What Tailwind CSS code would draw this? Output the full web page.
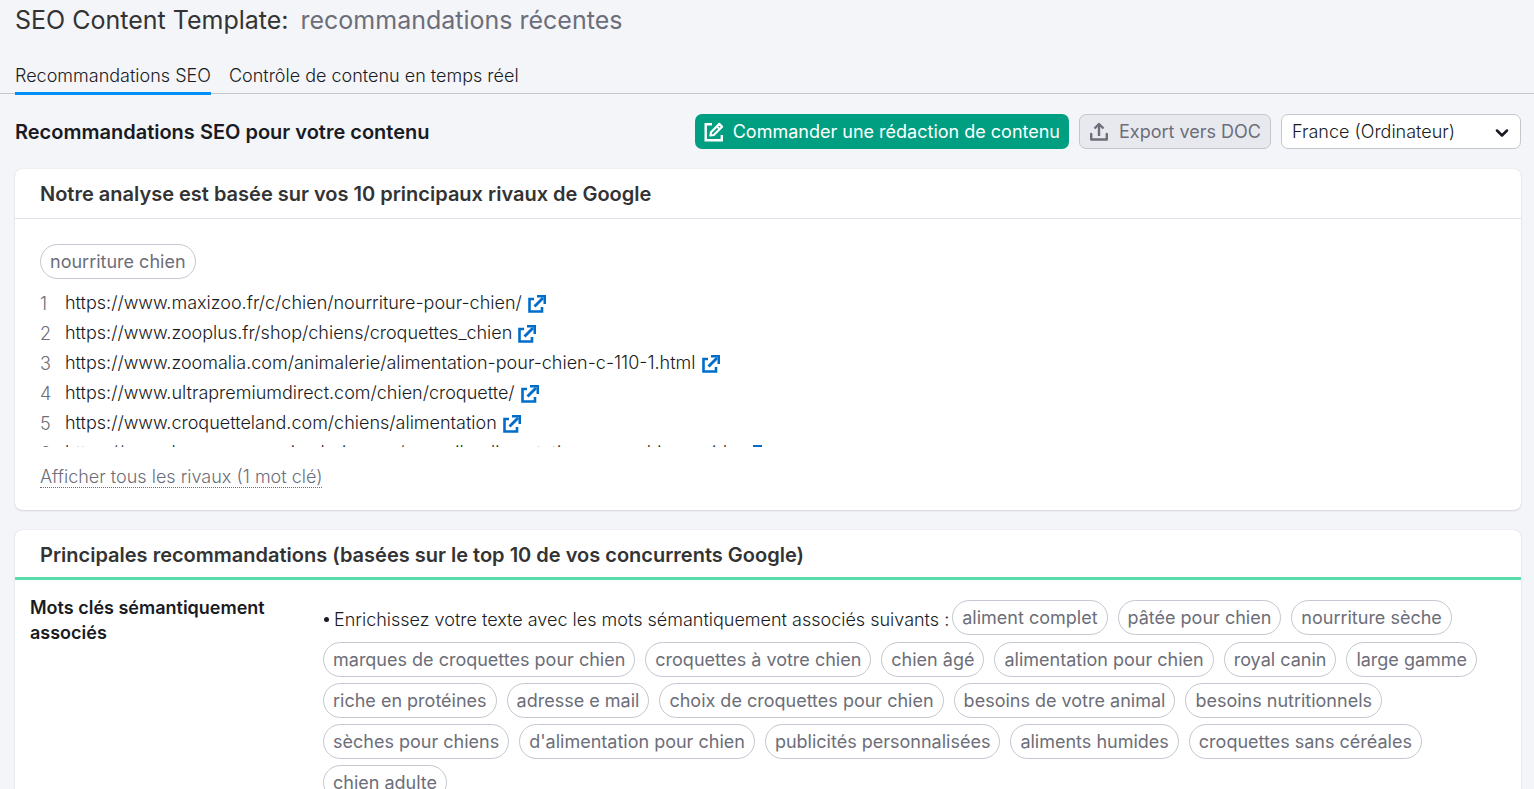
<!DOCTYPE html>
<html lang="fr">
<head>
<meta charset="utf-8">
<meta name="viewport" content="width=device-width, initial-scale=1">
<title>SEO Content Template</title>
<script src="https://cdn.jsdelivr.net/npm/@tailwindcss/browser@4"></script>
</head>
<body class="h-screen overflow-hidden bg-[#f4f5f9] font-['Inter',sans-serif] text-[18px] leading-[25px] text-[#191b23]">
<svg class="hidden">
  <symbol id="ext" viewBox="0 0 18 18">
    <path d="M6 4H1.5V16.5H14V12" fill="none" stroke="currentColor" stroke-width="2.6"/>
    <path d="M6.5 11.5L15 3" fill="none" stroke="currentColor" stroke-width="2.8"/>
    <path d="M9 0H18V9H15.5V2.5H9Z" fill="currentColor"/>
  </symbol>
</svg>
<header>
  <h1 class="flex gap-3 px-[15px] pt-1 text-[25px] leading-8 text-[#333]">SEO Content Template: <span class="text-[#6c6e79]">recommandations récentes</span></h1>
  <nav class="mt-[27px] flex gap-[18px] border-b border-[#c4c7cf] px-[15px] font-light">
    <a href="#" class="-mb-[2px] border-b-3 border-[#008ff8] pb-1">Recommandations SEO</a>
    <a href="#">Contrôle de contenu en temps réel</a>
  </nav>
</header>
<main class="px-[15px]">
  <div class="-mr-[2px] mt-5 flex items-center gap-[10px]">
    <h2 class="mr-auto pt-[2px] text-[20px] font-semibold">Recommandations SEO pour votre contenu</h2>
    <button class="flex h-[35px] items-center gap-[9px] rounded-[7px] bg-[#009f81] px-[9px] text-white">
      <svg class="size-5" viewBox="0 0 20 20" fill="none" stroke="currentColor" stroke-width="2.4"><path d="M8 2.2H1.7V18.3H17.8V13"/><path d="M6.5 13.5L7 10.2L15.3 1.9L18.1 4.7L9.8 13Z" stroke-width="2.2" stroke-linejoin="round"/><path d="M13 4.5L15.5 7" stroke-width="1.8"/></svg>
      Commander une rédaction de contenu</button>
    <button class="flex h-[35px] items-center gap-[10px] rounded-[7px] border border-[#c4c7cf] bg-[#e8e9ee] px-[9px] text-[#6c6e79]">
      <svg class="size-5" viewBox="0 0 20 20" fill="none" stroke="currentColor" stroke-width="2.4"><path d="M2.2 12V17.500H17.800V12" stroke-linejoin="round" stroke-linecap="round"/><path d="M10 14V3"/><path d="M5.5 6.5L10 2L14.500 6.500" stroke-linejoin="round"/></svg>
      Export vers DOC</button>
    <div class="relative w-[240px]">
      <select aria-label="Base de données" class="h-[35px] w-full appearance-none rounded-[7px] border border-[#c4c7cf] bg-white pl-[10px] font-light"><option>France (Ordinateur)</option></select>
      <svg class="pointer-events-none absolute right-3 top-[15px] h-2 w-[14px]" viewBox="0 0 14 8" fill="none" stroke="#191b23" stroke-width="2.5" stroke-linecap="round" stroke-linejoin="round"><path d="M2 1.5L7 6.500L12 1.500"/></svg>
    </div>
  </div>

  <section class="-mr-[2px] mt-5 rounded-[7px] bg-white shadow-[0_0_1px_rgba(25,27,35,0.16),0_1px_2px_rgba(25,27,35,0.12)]">
    <h3 class="border-b border-[#e0e1e9] px-[25px] pb-[11px] pt-[13px] text-[20px] font-semibold text-[#333]">Notre analyse est basée sur vos 10 principaux rivaux de Google</h3>
    <div class="px-[25px] pb-[22px] pt-[25px]">
      <span class="inline-flex h-[35px] items-center rounded-full border border-[#c4c7cf] px-[9px] text-[#6c6e79]">nourriture chien</span>
      <ol class="mt-2 h-[160px] overflow-hidden font-light">
        <li class="flex h-[30px] items-center"><span class="mt-[2px] w-[25px] text-[#6c6e79]">1</span>https://www.maxizoo.fr/c/chien/nourriture-pour-chien/<a href="#" aria-label="Ouvrir" class="ml-[6px] mt-1 text-[#006dca]"><svg class="size-[18px]"><use href="#ext"/></svg></a></li>
        <li class="flex h-[30px] items-center"><span class="mt-[2px] w-[25px] text-[#6c6e79]">2</span>https://www.zooplus.fr/shop/chiens/croquettes_chien<a href="#" aria-label="Ouvrir" class="ml-[6px] mt-1 text-[#006dca]"><svg class="size-[18px]"><use href="#ext"/></svg></a></li>
        <li class="flex h-[30px] items-center"><span class="mt-[2px] w-[25px] text-[#6c6e79]">3</span>https://www.zoomalia.com/animalerie/alimentation-pour-chien-c-110-1.html<a href="#" aria-label="Ouvrir" class="ml-[6px] mt-1 text-[#006dca]"><svg class="size-[18px]"><use href="#ext"/></svg></a></li>
        <li class="flex h-[30px] items-center"><span class="mt-[2px] w-[25px] text-[#6c6e79]">4</span>https://www.ultrapremiumdirect.com/chien/croquette/<a href="#" aria-label="Ouvrir" class="ml-[6px] mt-1 text-[#006dca]"><svg class="size-[18px]"><use href="#ext"/></svg></a></li>
        <li class="flex h-[30px] items-center"><span class="mt-[2px] w-[25px] text-[#6c6e79]">5</span>https://www.croquetteland.com/chiens/alimentation<a href="#" aria-label="Ouvrir" class="ml-[6px] mt-1 text-[#006dca]"><svg class="size-[18px]"><use href="#ext"/></svg></a></li>
        <li class="flex h-[30px] items-center"><span class="mt-[2px] w-[25px] text-[#6c6e79]">6</span>https://www.bonsecoursanimalerie.com/conseils-alimentation-pour-chien-guide<a href="#" aria-label="Ouvrir" class="ml-[6px] mt-1 text-[#006dca]"><svg class="size-[18px]"><use href="#ext"/></svg></a></li>
      </ol>
      <button class="mt-[18px] block border-b border-dotted border-[#6c6e79] pt-px leading-[21px] font-light text-[#6c6e79]">Afficher tous les rivaux (1 mot clé)</button>
    </div>
  </section>

  <section class="-mr-[2px] mt-5 rounded-[7px] bg-white shadow-[0_0_1px_rgba(25,27,35,0.16),0_1px_2px_rgba(25,27,35,0.12)]">
    <h3 class="border-b-3 border-[#59ddaa] px-[25px] pb-[9px] pt-[13px] text-[20px] font-semibold text-[#333]">Principales recommandations (basées sur le top 10 de vos concurrents Google)</h3>
    <div class="flex gap-[15px] px-[15px] py-5">
      <h4 class="-mt-[5px] w-[278px] shrink-0 font-semibold">Mots clés sémantiquement associés</h4>
      <ul class="flex flex-wrap gap-x-[10px] gap-y-[6px] text-[#6c6e79] [&>li+li]:inline-flex [&>li+li]:h-[35px] [&>li+li]:items-center [&>li+li]:rounded-full [&>li+li]:border [&>li+li]:border-[#c4c7cf] [&>li+li]:px-[9px]">
        <li class="-mr-[7px] flex h-9 items-center gap-[5px] pl-px pt-[3px] font-light text-[#191b23]"><span class="size-[5px] rounded-full bg-[#191b23]"></span>Enrichissez votre texte avec les mots sémantiquement associés suivants :</li>
        <li>aliment complet</li><li>pâtée pour chien</li><li>nourriture sèche</li>
        <li>marques de croquettes pour chien</li><li>croquettes à votre chien</li><li>chien âgé</li><li>alimentation pour chien</li><li>royal canin</li><li>large gamme</li>
        <li>riche en protéines</li><li>adresse e mail</li><li>choix de croquettes pour chien</li><li>besoins de votre animal</li><li>besoins nutritionnels</li>
        <li>sèches pour chiens</li><li>d'alimentation pour chien</li><li>publicités personnalisées</li><li>aliments humides</li><li>croquettes sans céréales</li>
        <li>chien adulte</li>
      </ul>
    </div>
  </section>
</main>
</body>
</html>
